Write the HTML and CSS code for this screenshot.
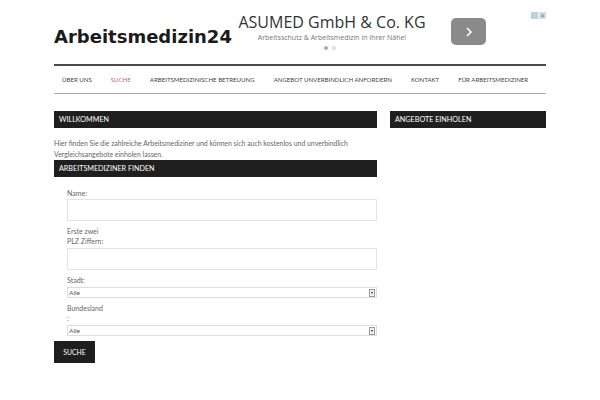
FILE: index.html
```html
<!DOCTYPE html>
<html lang="de">
<head>
<meta charset="utf-8">
<title>Arbeitsmedizin24</title>
<link rel="stylesheet" href="styles.css">
</head>
<body>
<div class="page">
  <header class="masthead">
    <div class="logo">Arbeitsmedizin24</div>
    <div class="ad">
      <div class="ad-text">
        <div class="ad-title">ASUMED GmbH &amp; Co. KG</div>
        <div class="ad-sub">Arbeitsschutz &amp; Arbeitsmedizin in Ihrer Nähe!</div>
        <div class="ad-dots"><span class="dot on"></span><span class="dot"></span></div>
      </div>
      <div class="ad-btn">
        <svg width="10" height="12" viewBox="0 0 10 12"><path d="M3 2 L7 6 L3 10" fill="none" stroke="#fff" stroke-width="1.6"/></svg>
      </div>
      <div class="adchoices"><span class="ac-i"></span><span class="ac-x">✕</span></div>
    </div>
  </header>
  <nav class="mainnav">
    <ul>
      <li>ÜBER UNS</li>
      <li class="active">SUCHE</li>
      <li>ARBEITSMEDIZINISCHE BETREUUNG</li>
      <li>ANGEBOT UNVERBINDLICH ANFORDERN</li>
      <li>KONTAKT</li>
      <li>FÜR ARBEITSMEDIZINER</li>
    </ul>
  </nav>
  <div class="content">
    <main class="primary">
      <h2 class="bar">WILLKOMMEN</h2>
      <p class="intro">Hier finden Sie die zahlreiche Arbeitsmediziner und können sich auch kostenlos und unverbindlich Vergleichsangebote einholen lassen.</p>
      <h2 class="bar">ARBEITSMEDIZINER FINDEN</h2>
      <form class="search">
        <div class="fields">
          <label class="lbl">Name:</label>
          <input class="txt" type="text">
          <label class="lbl gap">Erste zwei<br>PLZ Ziffern:</label>
          <input class="txt" type="text">
          <label class="lbl gap">Stadt:</label>
          <div class="sel"><span class="sel-val">Alle</span><span class="sel-arrow"></span></div>
          <label class="lbl gap">Bundesland<br>:</label>
          <div class="sel"><span class="sel-val">Alle</span><span class="sel-arrow"></span></div>
        </div>
        <button class="btn" type="button">SUCHE</button>
      </form>
    </main>
    <aside class="sidebar">
      <h2 class="bar">ANGEBOTE EINHOLEN</h2>
    </aside>
  </div>
</div>
</body>
</html>
```
FILE: styles.css
```css
* { box-sizing: border-box; }
html, body { margin: 0; padding: 0; background: #fff; }
body { font-family: "Lato", "Open Sans", sans-serif; color: #666; }
.page { width: 492px; margin: 0 auto; }

.masthead { display: flex; align-items: flex-start; height: 64px; }
.logo {
  font-family: "DejaVu Sans", sans-serif; font-weight: bold; font-size: 18px;
  line-height: 20px; color: #1b1b1b; margin-top: 27px; letter-spacing: 0;
  width: 178px; white-space: nowrap;
}
.ad { flex: 1; display: flex; align-items: flex-start; }
.ad-text { width: 200px; margin-left: 0; padding-top: 12px; text-align: center; }
.ad-title { font-family: "Open Sans", sans-serif; font-size: 16px; line-height: 20px; color: #333; white-space: nowrap; }
.ad-sub { font-family: "Open Sans", sans-serif; font-size: 7px; line-height: 10px; color: #777; margin-top: 1px; white-space: nowrap; }
.ad-dots { display: flex; justify-content: center; gap: 4px; margin-top: 3px; margin-left: -4px; }
.dot { width: 4px; height: 4px; border-radius: 50%; border: 1px solid #ccc; }
.dot.on { background: #aaa; border-color: #aaa; }
.ad-btn {
  margin-left: 19px; margin-top: 18px; width: 35px; height: 27px; border-radius: 5px;
  background: #8a8a8a; display: flex; align-items: center; justify-content: center;
}
.adchoices { margin-left: auto; margin-top: 12px; display: flex; gap: 1px; }
.ac-i { width: 7px; height: 7px; background: #b9d3dc; }
.ac-x { width: 7px; height: 7px; background: #cfe0e6; color: #5d8fa0; font-size: 6px; line-height: 7px; text-align: center; }

.mainnav { border-top: 2px solid #4a4a4a; border-bottom: 1px solid #aaa; }
.mainnav ul { list-style: none; margin: 0; padding: 0 0 0 8px; display: flex; gap: 19px; }
.mainnav li { font-size: 6.1px; line-height: 27px; color: #444; white-space: nowrap; }
.mainnav li.active { color: #d0607a; }

.content { display: flex; gap: 13px; margin-top: 17px; }
.primary { width: 323px; }
.sidebar { flex: 1; }
.bar {
  margin: 0; background: #1f1f1f; color: #fff; font-weight: normal;
  font-size: 7.2px; line-height: 17px; height: 17px; padding-left: 5px;
}
.intro { margin: 10px 0 0; font-size: 6.9px; line-height: 11px; color: #666; }

.search { margin: 0; }
.fields { padding: 11px 0 0 13px; display: flex; flex-direction: column; }
.lbl { font-size: 7px; line-height: 10px; color: #666; }
.lbl.gap { margin-top: 5px; }
.txt {
  display: block; width: 100%; height: 22px; margin: 1px 0 0; border: 1px solid #e3e3e3;
  background: #fff; padding: 0;
}
.lbl.gap + .txt { margin-top: 2px; }
.sel {
  display: flex; align-items: center; height: 11px; margin-top: 1px; border: 1px solid #ddd;
  background: #fff; padding: 0 1px 0 1px;
}
.lbl.gap + .sel { margin-top: 2px; }
.sel-val { flex: 1; font-size: 6.5px; line-height: 9px; color: #555; }
.sel-arrow {
  width: 6px; height: 8px; border: 1px solid #999; background: #f0f0f0; position: relative;
}
.sel-arrow::after {
  content: ""; position: absolute; left: 1px; top: 2px;
  border-left: 1.5px solid transparent; border-right: 1.5px solid transparent; border-top: 2px solid #222;
}
.btn {
  margin-top: 5px; width: 41px; height: 22px; border: 0; background: #1f1f1f; color: #fff;
  font-family: "Lato", sans-serif; font-size: 6.8px; padding: 0; cursor: pointer;
}
```
